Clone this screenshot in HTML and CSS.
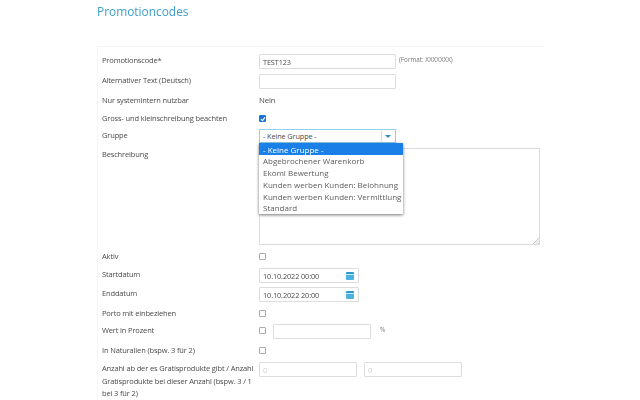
FILE: index.html
```
<!DOCTYPE html>
<html lang="de">
<head>
<meta charset="utf-8">
<title>Promotioncodes</title>
<link rel="stylesheet" href="styles.css">
</head>
<body>
<main class="page">
  <h1 class="title">Promotioncodes</h1>
  <form class="panel">
    <label class="label">Promotionscode*</label>
    <div class="control"><input class="input wide" type="text" value="TEST123"><span class="hint">(Format: XXXXXXX)</span></div>

    <label class="label">Alternativer Text (Deutsch)</label>
    <div class="control"><input class="input wide" type="text"></div>

    <label class="label">Nur systemintern nutzbar</label>
    <div class="control value">Nein</div>

    <label class="label">Gross- und kleinschreibung beachten</label>
    <div class="control"><span class="check checked"><svg viewBox="0 0 6 6" width="6" height="6"><path d="M1 3.2 2.5 4.7 5 1.4" fill="none" stroke="#fff" stroke-width="1.2"/></svg></span></div>

    <label class="label">Gruppe</label>
    <div class="control">
      <div class="select">
        <span class="select-text">- Keine Gruppe -</span>
        <span class="select-arrow"></span>
        <ul class="menu">
          <li class="option active">- Keine Gruppe -</li>
          <li class="option">Abgebrochener Warenkorb</li>
          <li class="option">Ekomi Bewertung</li>
          <li class="option">Kunden werben Kunden: Belohnung</li>
          <li class="option">Kunden werben Kunden: Vermittlung</li>
          <li class="option">Standard</li>
        </ul>
      </div>
    </div>

    <label class="label label-top">Beschreibung</label>
    <div class="control control-top"><div class="textarea"><svg class="grip" viewBox="0 0 6 6" width="6" height="6"><path d="M0 6 6 0M2.5 6 6 2.5M5 6 6 5" stroke="#aaa" stroke-width=".7"/></svg></div></div>

    <label class="label">Aktiv</label>
    <div class="control"><span class="check"></span></div>

    <label class="label">Startdatum</label>
    <div class="control"><div class="input date"><span>10.10.2022 00:00</span><span class="cal"></span></div></div>

    <label class="label">Enddatum</label>
    <div class="control"><div class="input date"><span>10.10.2022 20:00</span><span class="cal"></span></div></div>

    <label class="label">Porto mit einbeziehen</label>
    <div class="control"><span class="check"></span></div>

    <label class="label">Wert in Prozent</label>
    <div class="control"><span class="check"></span><input class="input percent" type="text"><span class="unit">%</span></div>

    <label class="label">In Naturalien (bspw. 3 für 2)</label>
    <div class="control"><span class="check"></span></div>

    <label class="label label-top label-multi">Anzahl ab der es Gratisprodukte gibt / Anzahl Gratisprodukte bei dieser Anzahl (bspw. 3 / 1 bei 3 für 2)</label>
    <div class="control control-top"><input class="input count" type="text" placeholder="0"><input class="input count" type="text" placeholder="0"></div>
  </form>
</main>
</body>
</html>
```
FILE: styles.css
```
* { box-sizing: border-box; }
html, body { margin: 0; height: 400px; overflow: hidden; background: #fff; }
body { font-family: "Open Sans", sans-serif; font-size: 7.5px; letter-spacing: -.15px; color: #4a4a4a; }
.page { padding-left: 97px; width: 545px; filter: blur(0.35px); }
.title { margin: 0; height: 46px; padding-top: 3px; font-size: 11.9px; letter-spacing: 0; line-height: 17px; font-weight: 400; color: #3d9fcb; }
.panel {
  display: grid;
  grid-template-columns: 157px 1fr;
  grid-template-rows: 20px 20px 18px 17px 19px 102px 18px 19px 20px 17px 20px 18px auto;
  height: 360px;
  padding: 7px 0 0 4px;
  border-top: 1px solid #f4f4f4;
  border-left: 1px solid #f6f6f6;
}
.label { line-height: 13px; height: 13px; white-space: nowrap; }
.label-top { padding-top: 0; }
.label-multi { height: auto; white-space: normal; line-height: 12.5px; width: 156px; }
.control { display: flex; align-items: flex-start; height: 15px; }
.control-top { height: auto; }
.value { line-height: 13px; font-size: 7.8px; }
.input {
  height: 15px;
  padding: 0 3px;
  border: 1px solid #ddd;
  border-radius: 1px;
  background: #fff;
  font: inherit;
  font-size: 7.3px;
  letter-spacing: -.1px;
  color: #4a4a4a;
  outline: none;
}
.input::placeholder { color: #ccc; }
.wide { width: 137px; padding-top: 1px; }
.hint { margin-left: 3px; font-size: 6.3px; letter-spacing: 0; line-height: 11px; color: #777; }
.check {
  display: flex; align-items: center; justify-content: center;
  width: 7px; height: 7px; margin-top: 3px;
  border: 1px solid #aaa; border-radius: 1px; background: #fff;
}
.check.checked { background: #1a73d9; border-color: #1a73d9; margin-top: 3px; }
.check svg { flex: none; }
.select {
  position: relative;
  display: flex;
  width: 137px; height: 14px;
  border: 1px solid #8fd3ea;
  background: #fff;
}
.select-text { flex: 1; padding-left: 3px; line-height: 12px; font-size: 7.3px; letter-spacing: -.1px; }
.select-arrow { position: relative; width: 14px; border-left: 1px solid #ddd; }
.select-arrow::after {
  content: ""; position: absolute; left: 3px; top: 5px;
  border: 3px solid transparent; border-top-color: #2c8fbd; border-bottom: 0;
}
.menu {
  position: absolute; z-index: 2; left: -1px; top: 13px;
  width: 144px; margin: 0; padding: 0; list-style: none;
  background: #fff;
  box-shadow: 0 1px 3px rgba(0,0,0,.55);
  font-size: 8px;
  letter-spacing: 0;
}
.option { height: 11.8px; padding-left: 4px; line-height: 11.8px; white-space: nowrap; overflow: hidden; color: #5c5c5c; }
.option.active { height: 12.3px; padding-top: 1px; background: #1a7fe6; color: #fff; }
.textarea { position: relative; width: 281px; height: 97px; border: 1px solid #ddd; background: #fff; }
.grip { position: absolute; right: 0; bottom: 0; }
.date { display: flex; align-items: center; justify-content: space-between; width: 100px; padding-right: 4px; }
.cal { width: 8px; height: 8px; border-radius: 1px; background: linear-gradient(#2b9ad0 0 2px, #cfeaf6 2px 3px, #4cb0e0 3px); }
.percent { width: 98px; margin-left: 7px; }
.unit { margin-left: 9px; font-size: 6.5px; letter-spacing: 0; line-height: 12px; color: #777; }
.count { width: 98px; margin-right: 7px; }
```
